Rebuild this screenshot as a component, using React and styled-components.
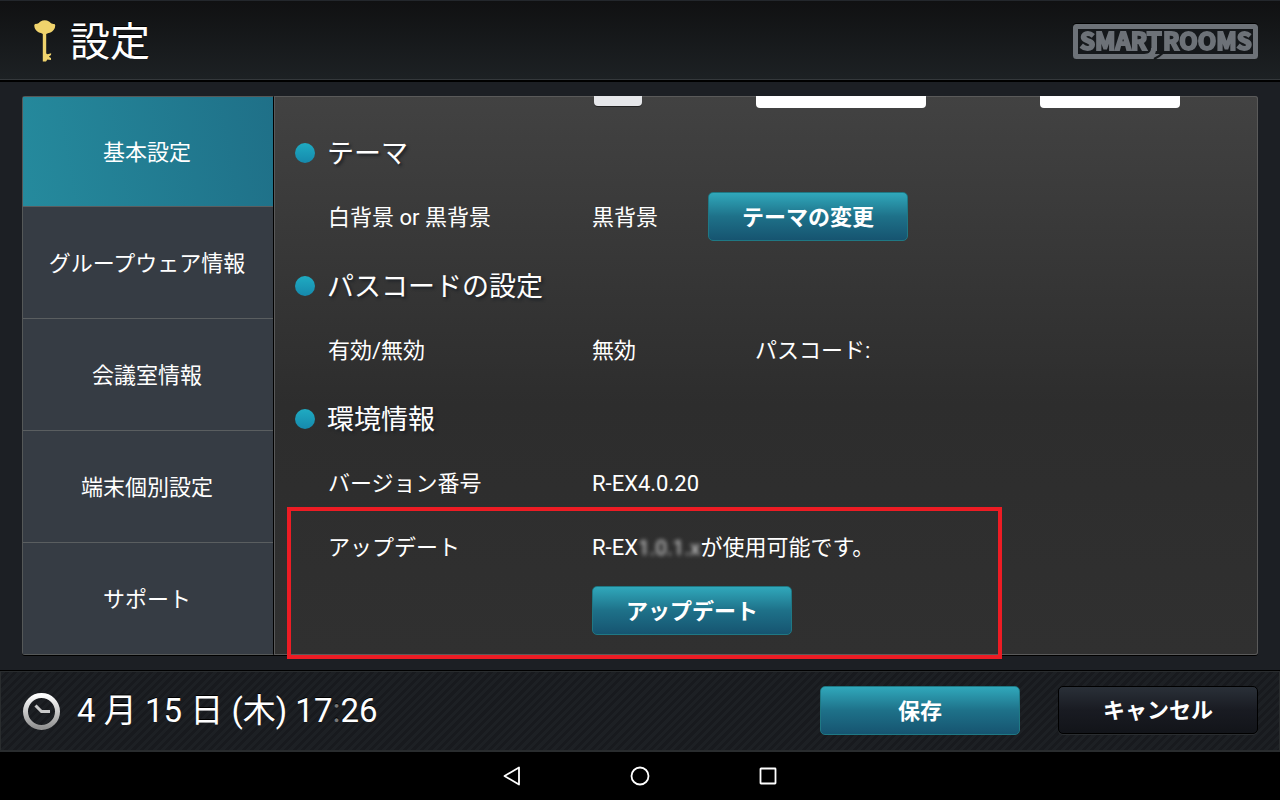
import { useState } from "react";
import styled, { createGlobalStyle } from "styled-components";

const tabs = ["基本設定", "グループウェア情報", "会議室情報", "端末個別設定", "サポート"];

function KeyIcon() {
    return (
        <svg width="22" height="42" viewBox="0 0 22 42" aria-hidden="true">
            <path
                d="M0.3 5.200C0.500 4 1.500 4 3 3.800C4.500 3.500 5 2.500 6.500 1.500C9 -0.200 12.500 -0.200 15 1.500C16.500 2.500 17 3.500 18.500 3.800C20 4 21 4 21.200 5.200C21.500 8.500 19 11 17 12.200C15.500 13 13.500 13 12.200 14V33.500L13.600 34.200L17.200 33.200L17 35L15.200 36.200V37L17 38V40L13.400 39.600L12 41.500H8.800V14C8 13 6 13 4.500 12.200C2.500 11 0 8.500 0.300 5.200Z"
                fill="#f0d36c"
            />
        </svg>
    );
}

function Logo() {
    return (
        <LogoSvg width="186" height="38" viewBox="0 0 186 38" role="img" aria-label="SMART ROOMS">
            <rect x="3.500" y="4.500" width="180" height="30" rx="1" fill="#15181b" stroke="#6d7278" strokeWidth="5" />
            <text x="8" y="28">SMART</text>
            <text x="91" y="28">ROOMS</text>
            <path d="M79 26H84C84 31 83 35 78 36H70V32C76 32 79 31 79 26Z" fill="#6d7278" />
            <path d="M92 30C89 33 86 35 82 37" fill="none" stroke="#15181b" strokeWidth="2" />
        </LogoSvg>
    );
}

function ClockIcon() {
    return (
        <svg width="38" height="38" viewBox="0 0 38 38" aria-hidden="true">
            <defs>
                <linearGradient id="clock" x1="0" y1="0" x2="0" y2="1">
                    <stop offset="0" stopColor="#fff" />
                    <stop offset="1" stopColor="#929292" />
                </linearGradient>
            </defs>
            <circle cx="19.500" cy="19.500" r="16" fill="none" stroke="url(#clock)" strokeWidth="5" />
            <path d="M13.500 13.500L19.500 19.500H28" fill="none" stroke="#c9c9c9" strokeWidth="3" />
        </svg>
    );
}

function SectionTitle({ children }) {
    return (
        <Heading>
            <Dot />
            <HeadingText>{children}</HeadingText>
        </Heading>
    );
}

export default function App() {
    const [active, setActive] = useState(0);

    return (
        <Page>
            <GlobalStyle />
            <Header>
                <Title>
                    <KeyIcon />
                    <h1>設定</h1>
                </Title>
                <Logo />
            </Header>

            <Main>
                <Sidebar>
                    {tabs.map((tab, index) => (
                        <Tab key={tab} $active={index === active} onClick={() => setActive(index)}>
                            {tab}
                        </Tab>
                    ))}
                </Sidebar>
                <Content>
                    <ClippedRow>
                        <SmallButton aria-label="切替" />
                        <TextInput aria-label="開始" />
                        <TextInput aria-label="終了" />
                    </ClippedRow>

                    <SectionTitle>テーマ</SectionTitle>
                    <Row $columns="264px 116px 1fr">
                        <Text>白背景 or 黒背景</Text>
                        <Text>黒背景</Text>
                        <Button>テーマの変更</Button>
                    </Row>

                    <SectionTitle>パスコードの設定</SectionTitle>
                    <Row $columns="264px 163px 1fr">
                        <Text>有効/無効</Text>
                        <Text>無効</Text>
                        <Text>パスコード:</Text>
                    </Row>

                    <SectionTitle>環境情報</SectionTitle>
                    <Row>
                        <Text>バージョン番号</Text>
                        <Text>R-EX4.0.20</Text>
                    </Row>
                    <UpdateGroup>
                        <Row>
                            <Text>アップデート</Text>
                            <Text>R-EX<Masked>1.0.1.x</Masked>が使用可能です。</Text>
                        </Row>
                        <Row>
                            <Text />
                            <Button>アップデート</Button>
                        </Row>
                        <Highlight />
                    </UpdateGroup>
                </Content>
            </Main>

            <Footer>
                <DateTime>
                    <ClockIcon />
                    <time>4 月 15 日 (木) 17<Colon>:</Colon>26</time>
                </DateTime>
                <Actions>
                    <Button>保存</Button>
                    <Button $dark>キャンセル</Button>
                </Actions>
            </Footer>

            <SystemNav>
                <NavButton aria-label="戻る">
                    <svg width="20" height="20" viewBox="0 0 20 20"><path d="M17 1.500V18.500L2.500 10Z" /></svg>
                </NavButton>
                <NavButton aria-label="ホーム">
                    <svg width="20" height="20" viewBox="0 0 20 20"><circle cx="10" cy="10" r="8.500" /></svg>
                </NavButton>
                <NavButton aria-label="履歴">
                    <svg width="20" height="20" viewBox="0 0 20 20"><rect x="2.500" y="2.500" width="15" height="15" rx="0.500" /></svg>
                </NavButton>
            </SystemNav>
        </Page>
    );
}

const GlobalStyle = createGlobalStyle`
    * {
        box-sizing: border-box;
    }
    body {
        margin: 0;
        background-color: #1c1f24;
    }
    body, button, input {
        font-family: Roboto, "Noto Sans CJK JP", sans-serif;
        color: #fff;
    }
    button {
        cursor: pointer;
    }
`;

const Page = styled.div`
    display: flex;
    flex-direction: column;
    min-height: 100vh;
`;

const Header = styled.header`
    display: flex;
    align-items: center;
    justify-content: space-between;
    height: 82px;
    padding: 0 22px 0 34px;
    background: linear-gradient(#101112, #1d2124);
    border-top: 1px solid #23272c;
    border-bottom: 2px solid #000;
    box-shadow: inset 0 -1px #34383b;
`;

const Title = styled.div`
    display: flex;
    align-items: center;
    gap: 14px;
    h1 {
        margin: 0;
        padding-top: 4px;
        font-size: 40px;
        line-height: 56px;
        font-weight: 400;
        text-shadow: 0 -1px #000;
    }
`;

const LogoSvg = styled.svg`
    filter: drop-shadow(0 -1px #000);
    text {
        font-family: "Noto Sans CJK JP", sans-serif;
        font-size: 24px;
        font-weight: 700;
        fill: #6d7278;
        stroke: #6d7278;
        stroke-width: 2px;
    }
`;

const Main = styled.main`
    display: flex;
    flex: 1;
    padding: 14px 22px 16px;
`;

const Sidebar = styled.nav`
    display: flex;
    flex-direction: column;
    width: 252px;
    border: 1px solid #555858;
    border-right: 1px solid #000;
    border-radius: 3px 0 0 3px;
    box-shadow: 0 1px #000;
`;

const Tab = styled.button`
    flex: 1 1 112px;
    padding: 2px 2px 0 0;
    border: none;
    border-bottom: 1px solid #5a5e60;
    background: ${(props) => (props.$active ? "linear-gradient(80deg, #258a9d, #1f7088)" : "#363c44")};
    font-size: 22px;
    line-height: 32px;
    &:first-child {
        flex-basis: 110px;
    }
    &:last-child {
        flex-basis: 111px;
        border-bottom: none;
    }
`;

const Content = styled.section`
    flex: 1;
    padding: 0 20px 12px 54px;
    border-radius: 0 3px 3px 0;
    background: linear-gradient(#424242, #2d2d2d 55%, #303030);
    box-shadow: inset 0 0 0 1px #5a5a5a, 0 1px #000;
    font-size: 22px;
    line-height: 32px;
`;

const ClippedRow = styled.div`
    display: grid;
    grid-template-columns: 48px 170px 140px;
    grid-template-rows: 12px;
    column-gap: 114px;
    align-items: end;
    height: 20px;
    padding-left: 266px;
    overflow: hidden;
`;

const SmallButton = styled.button`
    height: 48px;
    margin-bottom: 2px;
    border: none;
    border-radius: 4px;
    background-color: #e6e7ea;
    box-shadow: 0 1px #222;
`;

const TextInput = styled.input`
    width: 100%;
    height: 48px;
    border: none;
    border-radius: 4px;
    background-color: #fff;
    color: #222;
`;

const Heading = styled.h2`
    display: flex;
    align-items: center;
    gap: 12px;
    height: 69px;
    margin: 0 0 0 -33px;
    padding-top: 4px;
    font-size: 27px;
    font-weight: 400;
    text-shadow: 2px 2px 3px #1c2026;
`;

const HeadingText = styled.span`
    padding-top: 2px;
`;

const Dot = styled.span`
    width: 20px;
    height: 20px;
    border-radius: 50%;
    background: linear-gradient(#1fabc2, #1689ac);
`;

const Row = styled.div`
    display: grid;
    grid-template-columns: ${(props) => props.$columns || "264px 1fr"};
    align-items: center;
    height: 64px;
    padding-bottom: 1px;
`;

const Text = styled.span`
    padding-top: 3px;
`;

const Button = styled.button`
    width: 200px;
    height: ${(props) => (props.$dark ? "48px" : "49px")};
    padding: 2px 0 0;
    border: 1px solid ${(props) => (props.$dark ? "#000" : "#1f7884")};
    border-radius: 5px;
    background: ${(props) =>
        props.$dark
            ? "linear-gradient(#2a3038, #191b22 50%, #121419)"
            : "linear-gradient(#30a8bb, #1e7189 50%, #165470)"};
    box-shadow: ${(props) => (props.$dark ? "0 1px #2a2d30" : "none")};
    font-size: 22px;
    line-height: 32px;
    font-weight: 700;
`;

const UpdateGroup = styled.div`
    position: relative;
`;

const Masked = styled.span`
    display: inline-block;
    font-size: 21px;
    color: #ddd;
    filter: blur(2px);
`;

const Highlight = styled.div`
    position: absolute;
    top: -8px;
    bottom: -16px;
    left: -41px;
    width: 715px;
    border: 4px solid #ed1c24;
    pointer-events: none;
`;

const Footer = styled.footer`
    display: flex;
    align-items: center;
    justify-content: space-between;
    height: 81px;
    padding: 0 21px 1px;
    border: 1px solid #292c2e;
    border-bottom-width: 2px;
    box-shadow: 0 -1px #000;
    background: repeating-linear-gradient(135deg, #1d2024 0 3px, #181a1e 3px 6px);
`;

const DateTime = styled.div`
    display: flex;
    align-items: center;
    gap: 17px;
    font-size: 33px;
    line-height: 48px;
    text-shadow: 0 -1px #000;
`;

const Colon = styled.span`
    color: #777;
`;

const Actions = styled.div`
    display: flex;
    align-items: flex-start;
    gap: 38px;
`;

const SystemNav = styled.nav`
    display: flex;
    align-items: center;
    justify-content: center;
    gap: 108px;
    height: 48px;
    background-color: #000;
`;

const NavButton = styled.button`
    display: flex;
    padding: 0;
    border: none;
    background: none;
    svg {
        fill: none;
        stroke: #fff;
        stroke-width: 1.8px;
        stroke-linejoin: round;
    }
`;
